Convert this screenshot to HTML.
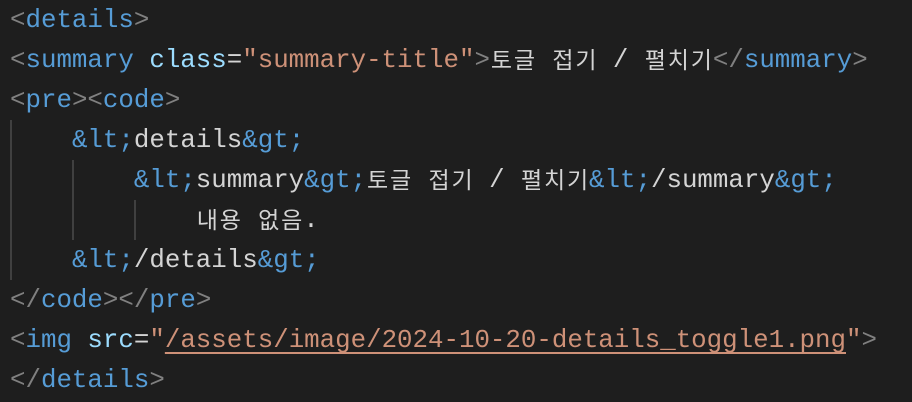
<!DOCTYPE html>
<html><head><meta charset="utf-8"><style>
html,body{margin:0;padding:0;background:#1e1e1e;width:912px;height:402px;overflow:hidden}
.c{position:relative;top:1px;font-family:"Liberation Mono",monospace;font-size:25.8px;color:#d4d4d4}
.l{position:absolute;left:10px;height:40px;line-height:40px;white-space:pre}
.b{color:#808080}.t{color:#569cd6}.a{color:#9cdcfe}.s{color:#ce9178}.e{color:#569cd6}
.h{display:inline-block;position:relative;top:-3px;width:23px;height:40px;line-height:40px;vertical-align:top;text-align:center;overflow:visible;font-family:"Noto Sans CJK KR",sans-serif;font-size:23px}
.u{text-decoration:underline;text-underline-offset:5px;text-decoration-thickness:2px}
.g{position:absolute;width:2px;background:#404040}
</style></head><body><div class="c">
<div class="g" style="left:10px;top:119px;height:160px"></div>
<div class="g" style="left:72px;top:159px;height:80px"></div>
<div class="g" style="left:134px;top:199px;height:40px"></div>
<div class="l" style="top:0"><span class="b">&lt;</span><span class="t">details</span><span class="b">&gt;</span></div>
<div class="l" style="top:40px"><span class="b">&lt;</span><span class="t">summary</span> <span class="a">class</span>=<span class="s">"summary-title"</span><span class="b">&gt;</span><span class="h">토</span><span class="h">글</span> <span class="h">접</span><span class="h">기</span> / <span class="h">펼</span><span class="h">치</span><span class="h">기</span><span class="b">&lt;/</span><span class="t">summary</span><span class="b">&gt;</span></div>
<div class="l" style="top:80px"><span class="b">&lt;</span><span class="t">pre</span><span class="b">&gt;&lt;</span><span class="t">code</span><span class="b">&gt;</span></div>
<div class="l" style="top:120px">    <span class="e">&amp;lt;</span>details<span class="e">&amp;gt;</span></div>
<div class="l" style="top:160px">        <span class="e">&amp;lt;</span>summary<span class="e">&amp;gt;</span><span class="h">토</span><span class="h">글</span> <span class="h">접</span><span class="h">기</span> / <span class="h">펼</span><span class="h">치</span><span class="h">기</span><span class="e">&amp;lt;</span>/summary<span class="e">&amp;gt;</span></div>
<div class="l" style="top:200px">            <span class="h">내</span><span class="h">용</span> <span class="h">없</span><span class="h">음</span>.</div>
<div class="l" style="top:240px">    <span class="e">&amp;lt;</span>/details<span class="e">&amp;gt;</span></div>
<div class="l" style="top:280px"><span class="b">&lt;/</span><span class="t">code</span><span class="b">&gt;&lt;/</span><span class="t">pre</span><span class="b">&gt;</span></div>
<div class="l" style="top:320px"><span class="b">&lt;</span><span class="t">img</span> <span class="a">src</span>=<span class="s">"<span class="u">/assets/image/2024-10-20-details_toggle1.png</span>"</span><span class="b">&gt;</span></div>
<div class="l" style="top:360px"><span class="b">&lt;/</span><span class="t">details</span><span class="b">&gt;</span></div>
</div></body></html>
